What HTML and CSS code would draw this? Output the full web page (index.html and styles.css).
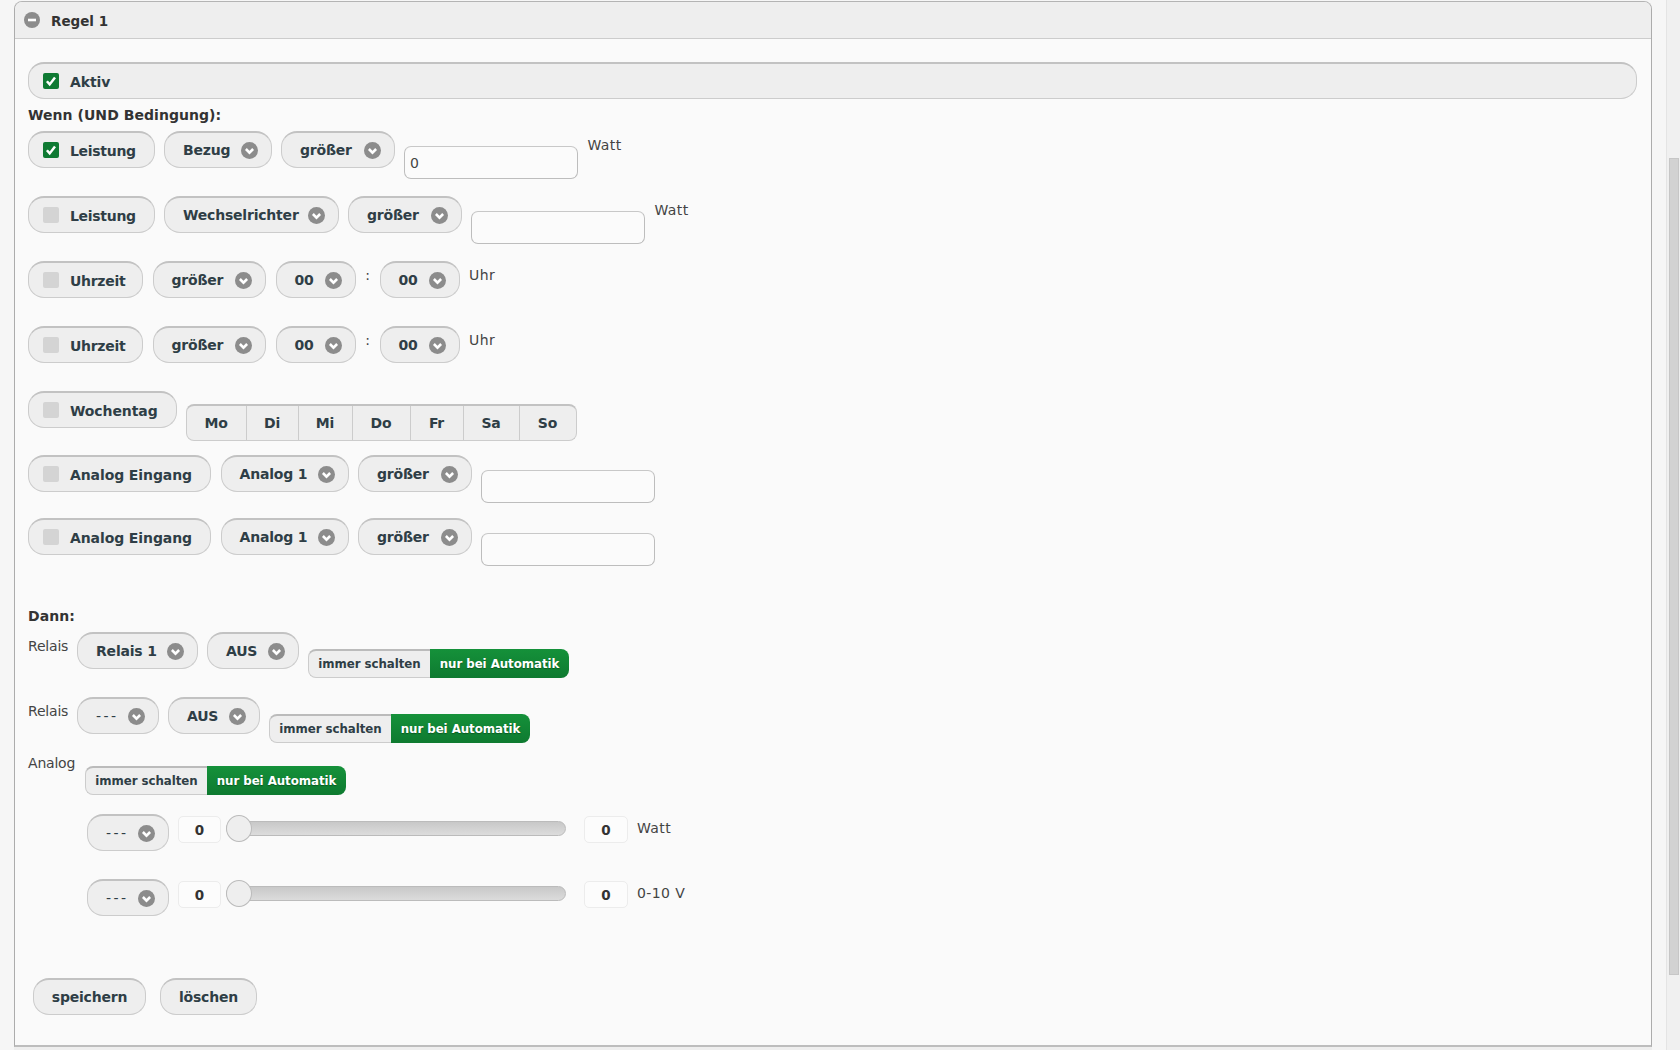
FILE: index.html
```html
<!DOCTYPE html>
<html lang="de">
<head>
<meta charset="utf-8">
<title>Regel 1</title>
<link rel="stylesheet" href="styles.css">
</head>
<body>
<svg class="defs" width="0" height="0" aria-hidden="true">
  <symbol id="chev" viewBox="0 0 16 16"><circle cx="8" cy="8" r="8" fill="#8c8c8c"/><path d="M4.6 6.6 8 10l3.4-3.4" fill="none" stroke="#fff" stroke-width="2.4"/></symbol>
  <symbol id="tick" viewBox="0 0 16 16"><rect width="16" height="16" rx="2" fill="#0f7a33"/><path d="M3.9 8.2 6.7 11.4 12 4.6" fill="none" stroke="#fff" stroke-width="2.5"/></symbol>
</svg>
<div class="page">
  <main class="panel">
    <header class="panel-head">
      <svg class="head-icon" viewBox="0 0 16 16"><circle cx="8" cy="8" r="8" fill="#8c8c8c"/><rect x="4" y="6.7" width="8" height="2.6" fill="#fff"/></svg>
      <h1>Regel 1</h1>
    </header>
    <div class="panel-body">
      <div class="btn check wide"><svg class="box"><use href="#tick"/></svg><span>Aktiv</span></div>
      <div class="heading">Wenn (UND Bedingung):</div>

      <div class="row">
        <div class="btn check c-lei"><svg class="box"><use href="#tick"/></svg><span>Leistung</span></div>
        <div class="btn sel w-bezug"><span>Bezug</span><svg class="chev"><use href="#chev"/></svg></div>
        <div class="btn sel w-gr"><span>größer</span><svg class="chev"><use href="#chev"/></svg></div>
        <input class="field" value="0"><span class="unit">Watt</span>
      </div>
      <div class="row">
        <div class="btn check c-lei"><i class="box off"></i><span>Leistung</span></div>
        <div class="btn sel w-wr"><span>Wechselrichter</span><svg class="chev"><use href="#chev"/></svg></div>
        <div class="btn sel w-gr"><span>größer</span><svg class="chev"><use href="#chev"/></svg></div>
        <input class="field"><span class="unit">Watt</span>
      </div>
      <div class="row">
        <div class="btn check c-uhr"><i class="box off"></i><span>Uhrzeit</span></div>
        <div class="btn sel w-gr"><span>größer</span><svg class="chev"><use href="#chev"/></svg></div>
        <div class="btn sel w-00"><span>00</span><svg class="chev"><use href="#chev"/></svg></div>
        <span class="colon">:</span>
        <div class="btn sel w-00"><span>00</span><svg class="chev"><use href="#chev"/></svg></div>
        <span class="unit">Uhr</span>
      </div>
      <div class="row">
        <div class="btn check c-uhr"><i class="box off"></i><span>Uhrzeit</span></div>
        <div class="btn sel w-gr"><span>größer</span><svg class="chev"><use href="#chev"/></svg></div>
        <div class="btn sel w-00"><span>00</span><svg class="chev"><use href="#chev"/></svg></div>
        <span class="colon">:</span>
        <div class="btn sel w-00"><span>00</span><svg class="chev"><use href="#chev"/></svg></div>
        <span class="unit">Uhr</span>
      </div>
      <div class="row row-days">
        <div class="btn check c-woc"><i class="box off"></i><span>Wochentag</span></div>
        <div class="days">
          <span class="d-mo">Mo</span><span class="d-di">Di</span><span class="d-mi">Mi</span><span class="d-do">Do</span><span class="d-fr">Fr</span><span class="d-sa">Sa</span><span class="d-so">So</span>
        </div>
      </div>
      <div class="row row-analog">
        <div class="btn check c-ana"><i class="box off"></i><span>Analog Eingang</span></div>
        <div class="btn sel w-an"><span>Analog 1</span><svg class="chev"><use href="#chev"/></svg></div>
        <div class="btn sel w-gr"><span>größer</span><svg class="chev"><use href="#chev"/></svg></div>
        <input class="field">
      </div>
      <div class="row row-analog">
        <div class="btn check c-ana"><i class="box off"></i><span>Analog Eingang</span></div>
        <div class="btn sel w-an"><span>Analog 1</span><svg class="chev"><use href="#chev"/></svg></div>
        <div class="btn sel w-gr"><span>größer</span><svg class="chev"><use href="#chev"/></svg></div>
        <input class="field">
      </div>

      <div class="heading then">Dann:</div>
      <div class="row row-act">
        <span class="lbl">Relais</span>
        <div class="btn sel w-rel"><span>Relais 1</span><svg class="chev"><use href="#chev"/></svg></div>
        <div class="btn sel w-aus"><span>AUS</span><svg class="chev"><use href="#chev"/></svg></div>
        <div class="switch"><span class="sw-off">immer schalten</span><span class="sw-on">nur bei Automatik</span></div>
      </div>
      <div class="row row-act second">
        <span class="lbl">Relais</span>
        <div class="btn sel w-dash"><span class="dash">---</span><svg class="chev"><use href="#chev"/></svg></div>
        <div class="btn sel w-aus"><span>AUS</span><svg class="chev"><use href="#chev"/></svg></div>
        <div class="switch"><span class="sw-off">immer schalten</span><span class="sw-on">nur bei Automatik</span></div>
      </div>
      <div class="row row-analogout">
        <span class="lbl">Analog</span>
        <div class="switch"><span class="sw-off">immer schalten</span><span class="sw-on">nur bei Automatik</span></div>
      </div>
      <div class="row row-slider">
        <div class="btn sel w-dash"><span class="dash">---</span><svg class="chev"><use href="#chev"/></svg></div>
        <div class="num">0</div>
        <div class="slider"><i class="handle"></i></div>
        <div class="num num-r">0</div>
        <span class="unit">Watt</span>
      </div>
      <div class="row row-slider">
        <div class="btn sel w-dash"><span class="dash">---</span><svg class="chev"><use href="#chev"/></svg></div>
        <div class="num">0</div>
        <div class="slider"><i class="handle"></i></div>
        <div class="num num-r">0</div>
        <span class="unit">0-10 V</span>
      </div>
      <div class="actions">
        <button class="btn plain b-save">speichern</button>
        <button class="btn plain b-del">löschen</button>
      </div>
    </div>
  </main>
  <div class="next-panel"></div>
</div>
<aside class="scrollbar"><div class="thumb"></div></aside>
</body>
</html>
```

FILE: styles.css
```css
* { box-sizing: border-box; }
html, body { margin: 0; height: 1050px; overflow: hidden; }
body {
  display: flex;
  background: #f6f6f6;
  font: 14px "DejaVu Sans", Verdana, sans-serif;
  color: #333;
}
.defs { position: absolute; }
.page { width: 1666px; padding: 1px 14px 0; }
.panel {
  width: 1638px;
  height: 1046px;
  background: #fafafa;
  border: 1px solid #acacac;
  border-top-color: #b4b4b4;
  border-width: 1px 1px 2px;
  border-bottom-color: #bdbdbd;
  border-radius: 8px 8px 0 0;
}
.panel-head {
  display: flex;
  align-items: center;
  height: 37px;
  padding: 0 0 0 9px;
  background: #eee;
  border-bottom: 1px solid #ccc;
  border-radius: 7px 7px 0 0;
}
.head-icon { width: 16px; height: 16px; margin-right: 11px; }
h1 { margin: 1px 0 0; font-size: 13.5px; font-weight: bold; color: #333; }
.panel-body { padding: 23px 14px 0 13px; }
.next-panel { height: 3px; background: #eee; }

.btn {
  display: inline-flex;
  align-items: center;
  height: 37px;
  flex: none;
  background: #eee;
  border: 1px solid #ccc;
  border-top: 2px solid #c2c2c2;
  border-radius: 16px;
  font: bold 14px "DejaVu Sans", Verdana, sans-serif;
  color: #2f3e46;
  white-space: nowrap;
}
.check { padding: 0 0 0 14px; }
.check > span { margin-left: 11px; margin-top: 1px; letter-spacing: -0.1px; }
.wide { display: flex; height: 37px; }
.c-lei { width: 126.5px; }
.c-lei > span { letter-spacing: -0.3px; }
.c-uhr { width: 115px; }
.c-uhr > span { letter-spacing: -0.3px; }
.c-woc { width: 149px; }
.c-ana { width: 183px; }
.box { width: 16px; height: 16px; flex: none; display: block; }
.box.off { background: #d4d4d4; border-radius: 2px; }
.sel { justify-content: space-between; padding: 0 13px 0 18px; letter-spacing: -0.2px; }
.chev { width: 17px; height: 17px; flex: none; }
.dash { font-weight: normal; letter-spacing: 2.5px; }
.w-bezug { width: 107.5px; }
.w-gr { width: 113.5px; }
.w-wr { width: 174.5px; }
.w-00 { width: 80px; }
.w-an { width: 128px; }
.w-rel { width: 120.5px; }
.w-aus { width: 91.5px; }
.w-dash { width: 81.5px; }

.heading { margin-top: 6px; height: 20px; line-height: 20px; font-weight: bold; font-size: 14px; letter-spacing: 0.05px; color: #333; }
.row { display: flex; align-items: flex-start; gap: 9.5px; min-height: 48px; margin-top: 6px; margin-bottom: 17px; }
.row + .row { margin-top: 0; }
.row-days { margin-bottom: 14px; }
.row-analog { margin-bottom: 15px; }
.field {
  width: 174px;
  height: 33px;
  margin-top: 15px;
  padding: 0 5px;
  background: #fbfbfb;
  border: 1px solid #bdbdbd;
  border-top-color: #c8c8c8;
  border-radius: 7px;
  font: 14px "DejaVu Sans", Verdana, sans-serif;
  color: #444;
}
.unit { font-size: 14px; line-height: 20px; margin-top: 4px; letter-spacing: 0.4px; color: #444; }
.colon { font-size: 14px; line-height: 20px; width: 5px; margin-top: 4px; text-align: center; color: #444; }
.days {
  display: flex;
  height: 37px;
  margin: 13px 0 0 -1px;
  background: #eee;
  border: 1px solid #ccc;
  border-top: 2px solid #c2c2c2;
  border-radius: 8px;
  font-weight: bold;
  font-size: 14px;
  color: #2f3e46;
}
.days span {
  display: flex;
  align-items: center;
  justify-content: center;
  border-right: 1px solid #ccc;
  letter-spacing: -0.2px;
}
.days span:last-child { border-right: 0; }
.d-mo { width: 60px; }
.d-di { width: 52px; }
.d-mi { width: 54px; }
.d-do { width: 58px; }
.d-fr { width: 53px; }
.d-sa { width: 56px; }
.d-so { width: 56px; }

.then { margin-top: 40px; }
.row-act { min-height: 46px; margin-top: 6px; margin-bottom: 19px; }
.row-act.second { margin-bottom: 6px; }
.lbl { width: 39.5px; flex: none; font-size: 14px; line-height: 20px; margin-top: 4px; letter-spacing: -0.2px; color: #444; }
.switch {
  display: flex;
  height: 29px;
  margin-top: 17px;
  flex: none;
  border-radius: 8px;
  font-size: 11.8px;
  font-weight: bold;
  letter-spacing: -0.05px;
}
.sw-off, .sw-on { display: flex; align-items: center; justify-content: center; height: 100%; }
.sw-off {
  width: 122px;
  background: #eee;
  border: 1px solid #ccc;
  border-top: 2px solid #bbb;
  border-right: 0;
  border-radius: 8px 0 0 8px;
  color: #2f3e46;
}
.sw-on {
  width: 139px;
  background: linear-gradient(#15913a, #0e7a30);
  border-radius: 0 8px 8px 0;
  color: #fff;
  text-shadow: 0 1px 1px #0a5a22;
}
.row-analogout { min-height: 46px; margin-bottom: 19px; }
.row-analogout .lbl { width: 47.5px; }
.row-slider { min-height: 37px; margin-bottom: 28px; padding-left: 59px; gap: 10px; }
.row-slider .w-dash { width: 82px; }
.num {
  width: 43px;
  height: 27px;
  margin: 2px 0 0 -1px;
  display: flex;
  align-items: center;
  justify-content: center;
  background: #fcfcfc;
  border: 1px solid #ececec;
  border-radius: 5px;
  font-size: 13.5px;
  font-weight: bold;
}
.num-r { width: 44px; margin: 2px -1px 0 8px; }
.slider {
  position: relative;
  width: 340px;
  height: 15px;
  margin: 7px 0 0 -5px;
  background: linear-gradient(#c8c8c8, #dcdcdc);
  border: 1px solid #bbb;
  border-radius: 8px;
}
.handle {
  position: absolute;
  left: -1px;
  top: -7px;
  width: 26px;
  height: 27px;
  background: #eee;
  border: 1px solid #bbb;
  border-radius: 50%;
}
.actions { display: flex; gap: 14px; margin: 62px 0 0 5px; }
.plain { justify-content: center; padding: 0; letter-spacing: -0.2px; }
.b-save { width: 113px; }
.b-del { width: 97px; }
.scrollbar { width: 14px; height: 1050px; background: #f0f0f0; border-left: 1px solid #e4e4e4; padding: 158px 1px 0 2px; }
.thumb { height: 817px; background: #d2d2d2; border: 1px solid #c6c6c6; }
```
